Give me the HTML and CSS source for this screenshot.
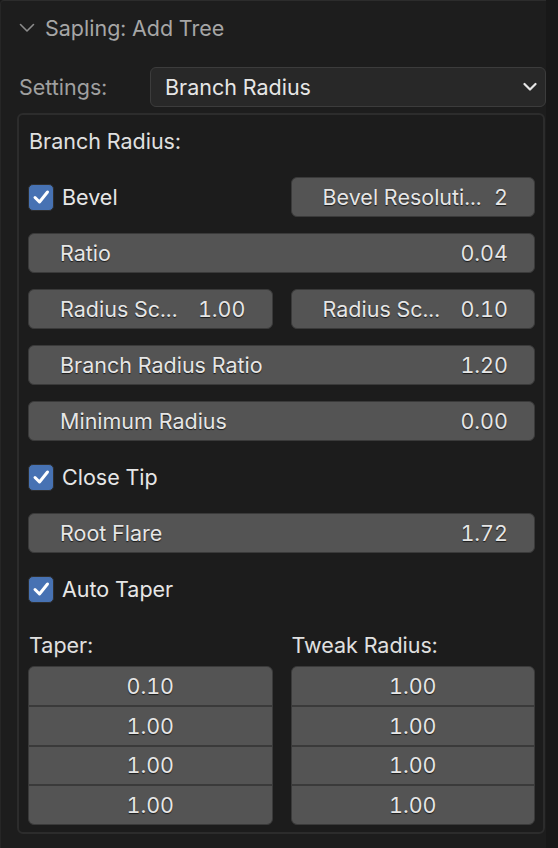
FILE: index.html
```html
<!DOCTYPE html>
<html>
<head>
<meta charset="utf-8">
<link rel="stylesheet" href="styles.css">
</head>
<body>
<div class="panel">
  <div class="header">
    <svg class="chev" width="16" height="10" viewBox="0 0 16 10"><path d="M1.5 1.5 L8 8 L14.5 1.5" fill="none" stroke="#8c8c8c" stroke-width="1.6" stroke-linecap="round" stroke-linejoin="round"/></svg>
    <span class="title">Sapling: Add Tree</span>
  </div>
  <div class="settings">
    <span class="settings-label">Settings:</span>
    <div class="dropdown">
      <span>Branch Radius</span>
      <svg width="14" height="10" viewBox="0 0 14 10"><path d="M1.5 2 L7 7.5 L12.5 2" fill="none" stroke="#e6e6e6" stroke-width="2.2" stroke-linecap="round" stroke-linejoin="round"/></svg>
    </div>
  </div>
  <div class="box">
    <div class="row"><span class="label">Branch Radius:</span></div>
    <div class="row two">
      <div class="check"><span class="cb"><svg width="22" height="22" viewBox="0 0 22 22"><path d="M5 11.5 L9.5 16 L17.5 6" fill="none" stroke="#fff" stroke-width="3" stroke-linecap="round" stroke-linejoin="round"/></svg></span><span class="cl">Bevel</span></div>
      <div class="field"><span>Bevel Resoluti...</span><span>2</span></div>
    </div>
    <div class="row"><div class="field"><span>Ratio</span><span>0.04</span></div></div>
    <div class="row two">
      <div class="field"><span>Radius Sc...</span><span>1.00</span></div>
      <div class="field"><span>Radius Sc...</span><span>0.10</span></div>
    </div>
    <div class="row"><div class="field"><span>Branch Radius Ratio</span><span>1.20</span></div></div>
    <div class="row"><div class="field"><span>Minimum Radius</span><span>0.00</span></div></div>
    <div class="row"><div class="check"><span class="cb"><svg width="22" height="22" viewBox="0 0 22 22"><path d="M5 11.5 L9.5 16 L17.5 6" fill="none" stroke="#fff" stroke-width="3" stroke-linecap="round" stroke-linejoin="round"/></svg></span><span class="cl">Close Tip</span></div></div>
    <div class="row"><div class="field"><span>Root Flare</span><span>1.72</span></div></div>
    <div class="row"><div class="check"><span class="cb"><svg width="22" height="22" viewBox="0 0 22 22"><path d="M5 11.5 L9.5 16 L17.5 6" fill="none" stroke="#fff" stroke-width="3" stroke-linecap="round" stroke-linejoin="round"/></svg></span><span class="cl">Auto Taper</span></div></div>
    <div class="row two">
      <span class="label">Taper:</span>
      <span class="label">Tweak Radius:</span>
    </div>
    <div class="two grids">
      <div class="stack">
        <div class="cell">0.10</div>
        <div class="cell">1.00</div>
        <div class="cell">1.00</div>
        <div class="cell">1.00</div>
      </div>
      <div class="stack">
        <div class="cell">1.00</div>
        <div class="cell">1.00</div>
        <div class="cell">1.00</div>
        <div class="cell">1.00</div>
      </div>
    </div>
  </div>
</div>
</body>
</html>
```
FILE: styles.css
```css
html, body {
  margin: 0;
  padding: 0;
  background: #181818;
}
body {
  width: 558px;
  height: 848px;
  overflow: hidden;
  font-family: Inter, "Noto Sans", sans-serif;
  font-size: 21.5px;
  font-variant-numeric: tabular-nums;
  color: #e6e6e6;
}
.panel {
  width: 546px;
  height: 848px;
  box-sizing: border-box;
  background: #1d1d1d;
  border-top: 1px solid #2c2c2c;
  border-left: 1px solid #262626;
  border-top-left-radius: 4px;
}
.header {
  height: 53px;
  display: flex;
  align-items: center;
  padding-left: 18px;
}
.chev {
  margin-right: 10px;
}
.title {
  color: #a6a6a6;
}
.settings {
  display: flex;
  align-items: center;
  height: 40px;
  margin-top: 13px;
  padding-left: 18px;
}
.settings-label {
  color: #a0a0a0;
  width: 131px;
}
.dropdown {
  flex: 1;
  height: 40px;
  box-sizing: border-box;
  background: #282828;
  border: 1.5px solid #3c3c3c;
  border-radius: 6px;
  display: flex;
  align-items: center;
  justify-content: space-between;
  padding: 0 8px 0 14px;
}
.box {
  margin-top: 6px;
  margin-left: 16px;
  width: 528px;
  box-sizing: border-box;
  border: 2px solid #2c2c2c;
  border-radius: 6px;
  background: #1c1c1c;
  padding: 6px 8px 7px 9px;
  display: flex;
  flex-direction: column;
  gap: 16px;
}
.row {
  height: 40px;
  display: flex;
  align-items: center;
}
.two {
  display: grid;
  grid-template-columns: 1fr 1fr;
  column-gap: 18px;
  align-items: center;
}
.label {
  padding-left: 1px;
  color: #e0e0e0;
}
.field {
  flex: 1;
  height: 40px;
  box-sizing: border-box;
  background: #545454;
  border: 1.5px solid #3a3a3a;
  border-radius: 6px;
  display: flex;
  align-items: center;
  justify-content: space-between;
  padding: 0 26px 0 31px;
  text-shadow: 0 1px 1px rgba(0,0,0,0.7);
}
.check {
  display: flex;
  align-items: center;
}
.cb {
  width: 26px;
  height: 27px;
  box-sizing: border-box;
  background: #4772b3;
  border: 1.5px solid #2e2e2e;
  border-radius: 5px;
  display: flex;
  align-items: center;
  justify-content: center;
}
.cl {
  margin-left: 8px;
}
.grids {
  margin-top: -15px;
  align-items: start;
}
.stack {
  display: flex;
  flex-direction: column;
  gap: 2px;
  background: #3a3a3a;
  border: 1.5px solid #3a3a3a;
  border-radius: 6px;
  overflow: hidden;
}
.cell {
  height: 37.75px;
  background: #545454;
  display: flex;
  align-items: center;
  justify-content: center;
  text-shadow: 0 1px 1px rgba(0,0,0,0.7);
}
```
